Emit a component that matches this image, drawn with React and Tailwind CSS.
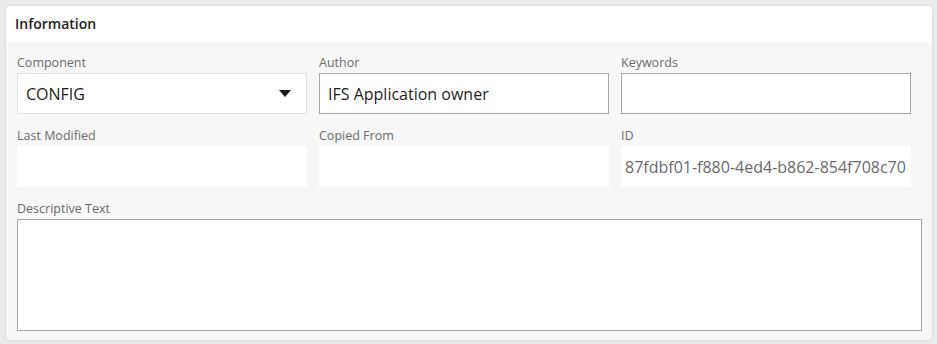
import React from "react";

const Field = ({ label, value, variant = "edit", select = false, muted = false }) => {
  const box =
    variant === "edit"
      ? "bg-white border border-[#a6a6a6]"
      : variant === "select"
      ? "bg-white border border-[#e2e2e2]"
      : "bg-white border border-transparent";

  return (
    <div className="pr-3">
      <div className="h-[18px] mb-[2px] text-[12.5px] leading-[20px] text-[#6b6b6b]">
        {label}
      </div>
      <div className={`h-[41px] flex items-center overflow-hidden ${box}`}>
        <span
          className={`flex-1 whitespace-nowrap overflow-hidden text-[16px] ${
            muted ? "ml-[3px] mr-[4px] text-[#6a6a6a]" : "ml-[8px] text-[#1e1e1e]"
          }`}
        >
          {value}
        </span>
        {select && (
          <svg width="12" height="7" viewBox="0 0 12 7" className="mr-[15px]">
            <path d="M0 0 L12 0 L6 7 Z" fill="#1a1a1a" />
          </svg>
        )}
      </div>
    </div>
  );
};

const App = () => {
  return (
    <div
      className="w-[937px] h-[344px] bg-[#ececec] pt-[6px] pl-[6px]"
      style={{ fontFamily: '"Open Sans", "Noto Sans", sans-serif' }}
    >
      <div className="w-[926px] h-[334px] rounded-[4px] bg-[#f7f7f7] overflow-hidden shadow-[0_0_3px_rgba(0,0,0,0.12)]">
        <div className="h-[36px] bg-white flex items-center pl-[9px] pb-[2px]">
          <h2 className="text-[14px] font-semibold text-[#222]">Information</h2>
        </div>

        <div className="pt-[11px] pl-[11px] pr-[9px]">
          <div className="grid grid-cols-3 gap-y-3">
            <Field label="Component" value="CONFIG" variant="select" select />
            <Field label="Author" value="IFS Application owner" />
            <Field label="Keywords" value="" />
            <Field label="Last Modified" value="" variant="read" />
            <Field label="Copied From" value="" variant="read" />
            <Field
              label="ID"
              value="87fdbf01-f880-4ed4-b862-854f708c70a1"
              variant="read"
              muted
            />
          </div>

          <div className="mt-3 w-[905px]">
            <div className="h-[18px] mb-[2px] text-[12.5px] leading-[20px] text-[#6b6b6b]">
              Descriptive Text
            </div>
            <div className="h-[112px] bg-white border border-[#a6a6a6]"></div>
          </div>
        </div>
      </div>
    </div>
  );
};

export default App;
